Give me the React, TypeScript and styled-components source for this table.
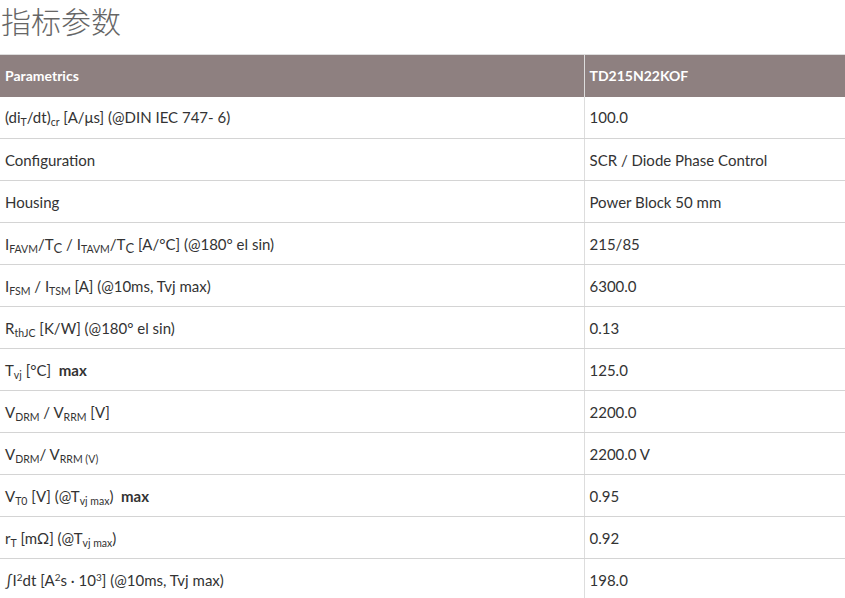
import React from "react";
import styled, { createGlobalStyle } from "styled-components";

const GlobalStyle = createGlobalStyle`
	html, body {
		margin: 0;
		padding: 0;
		background: #fff;
	}
	body {
		font-family: "Lato", "Noto Sans", "Liberation Sans", sans-serif;
		color: #333;
	}
`;

const Page = styled.div`
	width: 845px;
`;

const Title = styled.h2`
	margin: 0;
	padding-left: 1px;
	height: 54px;
	font-family: "Noto Sans CJK SC", sans-serif;
	font-weight: 300;
	font-size: 30px;
	line-height: 40px;
	color: #666;
`;

const Table = styled.table`
	width: 100%;
	border-collapse: collapse;
	border-top: 1px solid #ddd;
`;

const HeadCell = styled.th<{ $first?: boolean }>`
	width: ${({ $first }) => ($first ? "584px" : "auto")};
	height: 42px;
	padding: 0 5px;
	box-sizing: border-box;
	background: #8e8080;
	color: #fff;
	font-size: 14px;
	font-weight: 700;
	text-align: left;
	border-left: ${({ $first }) => ($first ? "none" : "1px solid #ddd")};
`;

const Cell = styled.td<{ $first?: boolean }>`
	height: 42px;
	padding: 0 5px;
	box-sizing: border-box;
	font-size: 15px;
	color: #333;
	border-bottom: 1px solid #d4d4d4;
	border-left: ${({ $first }) => ($first ? "none" : "1px solid #ddd")};
	white-space: nowrap;
`;

const Sub = styled.sub<{ $big?: boolean }>`
	font-size: ${({ $big }) => ($big ? "13px" : "10.5px")};
	vertical-align: -3px;
	line-height: 0;
`;

const Sup = styled.sup`
	font-size: 10px;
	vertical-align: 5px;
	line-height: 0;
`;

const Strong = styled.strong`
	font-weight: 700;
`;

interface Row {
	label: React.ReactNode;
	value: string;
}

const rows: Row[] = [
	{
		label: (
			<>
				(di<Sub>T</Sub>/dt)<Sub>cr</Sub> [A/μs] (@DIN IEC 747- 6)
			</>
		),
		value: "100.0",
	},
	{ label: "Configuration", value: "SCR / Diode Phase Control" },
	{ label: "Housing", value: "Power Block 50 mm" },
	{
		label: (
			<>
				I<Sub>FAVM</Sub>/T<Sub $big>C</Sub> / I<Sub>TAVM</Sub>/T<Sub $big>C</Sub> [A/°C] (@180° el sin)
			</>
		),
		value: "215/85",
	},
	{
		label: (
			<>
				I<Sub>FSM</Sub> / I<Sub>TSM</Sub> [A] (@10ms, Tvj max)
			</>
		),
		value: "6300.0",
	},
	{
		label: (
			<>
				R<Sub>thJC</Sub> [K/W] (@180° el sin)
			</>
		),
		value: "0.13",
	},
	{
		label: (
			<>
				T<Sub>vj</Sub> [°C]&nbsp; <Strong>max</Strong>
			</>
		),
		value: "125.0",
	},
	{
		label: (
			<>
				V<Sub>DRM</Sub> / V<Sub>RRM</Sub> [V]
			</>
		),
		value: "2200.0",
	},
	{
		label: (
			<>
				V<Sub>DRM</Sub>/ V<Sub>RRM (V)</Sub>
			</>
		),
		value: "2200.0 V",
	},
	{
		label: (
			<>
				V<Sub>T0</Sub> [V] (@T<Sub>vj max</Sub>)&nbsp; <Strong>max</Strong>
			</>
		),
		value: "0.95",
	},
	{
		label: (
			<>
				r<Sub>T</Sub> [mΩ] (@T<Sub>vj max</Sub>)
			</>
		),
		value: "0.92",
	},
	{
		label: (
			<>
				∫I<Sup>2</Sup>dt [A<Sup>2</Sup>s · 10<Sup>3</Sup>] (@10ms, Tvj max)
			</>
		),
		value: "198.0",
	},
];

const App = () => {
	return (
		<>
			<GlobalStyle />
			<Page>
				<Title>指标参数</Title>
				<Table>
					<thead>
						<tr>
							<HeadCell $first>Parametrics</HeadCell>
							<HeadCell>TD215N22KOF</HeadCell>
						</tr>
					</thead>
					<tbody>
						{rows.map((row, i) => (
							<tr key={i}>
								<Cell $first>{row.label}</Cell>
								<Cell>{row.value}</Cell>
							</tr>
						))}
					</tbody>
				</Table>
			</Page>
		</>
	);
};

export default App;
